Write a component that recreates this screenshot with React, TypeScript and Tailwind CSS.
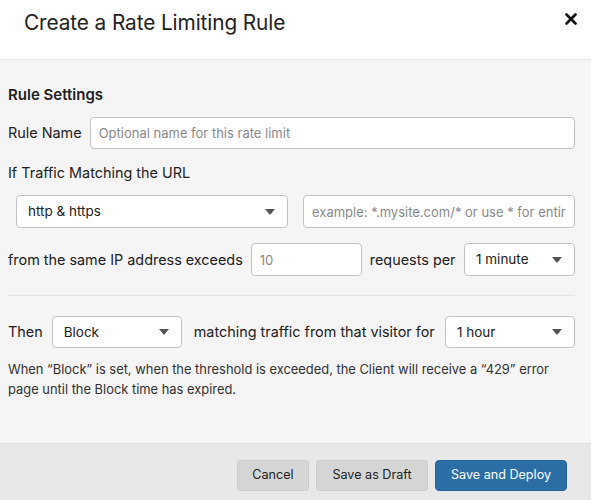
import React from "react";

const Chevron = () => (
  <svg className="w-[10px] h-[6px] text-[#555]" viewBox="0 0 10 6" fill="currentColor">
    <path d="M0 0h10L5 6z" />
  </svg>
);

const Select = ({ value, className }: { value: string; className: string }) => (
  <div
    className={`flex items-center justify-between bg-white border border-[#c3c3c3] rounded-[4px] pl-[11px] pr-[12px] text-[13.5px] text-[#222] ${className}`}
  >
    <span>{value}</span>
    <Chevron />
  </div>
);

const App = () => {
  return (
    <div className="w-[591px] h-[500px] flex flex-col bg-[#f5f5f5] text-[#222] font-['Inter','Liberation_Sans',sans-serif] overflow-hidden">
      {/* Header */}
      <div className="h-[60px] shrink-0 bg-white border-b border-[#e6e6e6] flex items-start justify-between pl-[24px] pr-[12px]">
        <h1 className="mt-[7px] text-[20.8px] font-normal text-[#222] tracking-[-0.1px]">Create a Rate Limiting Rule</h1>
        <button className="mt-[11px] p-[2px]">
          <svg className="w-[12px] h-[12px]" viewBox="0 0 12 12" fill="none" stroke="#111" strokeWidth={2.6} strokeLinecap="round">
            <path d="M1.5 1.5l9 9M10.5 1.5l-9 9" />
          </svg>
        </button>
      </div>

      {/* Body */}
      <div className="flex-1 pl-[8px] pr-[16px] pt-[25px]">
        <h2 className="text-[15px] leading-[20px] font-semibold">Rule Settings</h2>

        <div className="mt-[12px] flex items-center gap-[8px]">
          <label className="text-[14.4px] leading-[20px] whitespace-nowrap">Rule Name</label>
          <input
            className="flex-1 h-[32px] bg-white border border-[#c3c3c3] rounded-[4px] px-[8px] text-[13px] placeholder:text-[#8a8a8a] outline-none"
            placeholder="Optional name for this rate limit"
          />
        </div>

        <div className="mt-[14px] text-[14.4px] leading-[20px]">If Traffic Matching the URL</div>

        <div className="mt-[12px] pl-[8px] flex gap-[15px]">
          <Select value="http & https" className="w-[272px] h-[33px]" />
          <input
            className="flex-1 min-w-0 h-[33px] bg-white border border-[#c3c3c3] rounded-[4px] px-[8px] text-[13px] placeholder:text-[#8a8a8a] outline-none"
            placeholder="example: *.mysite.com/* or use * for entire site"
          />
        </div>

        <div className="mt-[15px] flex items-center">
          <span className="text-[14.4px] leading-[20px] whitespace-nowrap">from the same IP address exceeds</span>
          <input
            className="ml-[8px] w-[111px] h-[33px] bg-white border border-[#c3c3c3] rounded-[4px] px-[8px] text-[13px] placeholder:text-[#8a8a8a] outline-none"
            placeholder="10"
          />
          <span className="ml-[8px] text-[14.4px] leading-[20px] whitespace-nowrap">requests per</span>
          <Select value="1 minute" className="ml-auto w-[111px] h-[33px]" />
        </div>

        <div className="mt-[19px] border-t border-[#e2e2e2]" />

        <div className="mt-[20px] flex items-center">
          <span className="text-[14.4px] leading-[20px]">Then</span>
          <Select value="Block" className="ml-[9px] w-[130px] h-[32px]" />
          <span className="ml-[12px] text-[14.4px] leading-[20px] whitespace-nowrap">matching traffic from that visitor for</span>
          <Select value="1 hour" className="ml-auto w-[130px] h-[32px]" />
        </div>

        <p className="mt-[12px] text-[12.9px] leading-[20px] text-[#333] pr-[10px]">
          When “Block” is set, when the threshold is exceeded, the Client will receive a “429” error page until the Block time has expired.
        </p>
      </div>

      {/* Footer */}
      <div className="h-[57px] shrink-0 bg-[#e8e8e8] border-t border-[#dedede] flex items-start justify-end gap-[7px] pt-[16px] pr-[24px]">
        <button className="w-[72px] h-[31px] rounded-[4px] bg-[#d5d5d5] border border-dotted border-[#c4c4c4] text-[12.6px] text-[#222]">
          Cancel
        </button>
        <button className="w-[112px] h-[31px] rounded-[4px] bg-[#d5d5d5] border border-dotted border-[#c4c4c4] text-[12.6px] text-[#222]">
          Save as Draft
        </button>
        <button className="w-[132px] h-[31px] rounded-[4px] bg-[#2b6ea6] border border-[#24629a] text-[12.6px] text-white">
          Save and Deploy
        </button>
      </div>
    </div>
  );
};

export default App;
